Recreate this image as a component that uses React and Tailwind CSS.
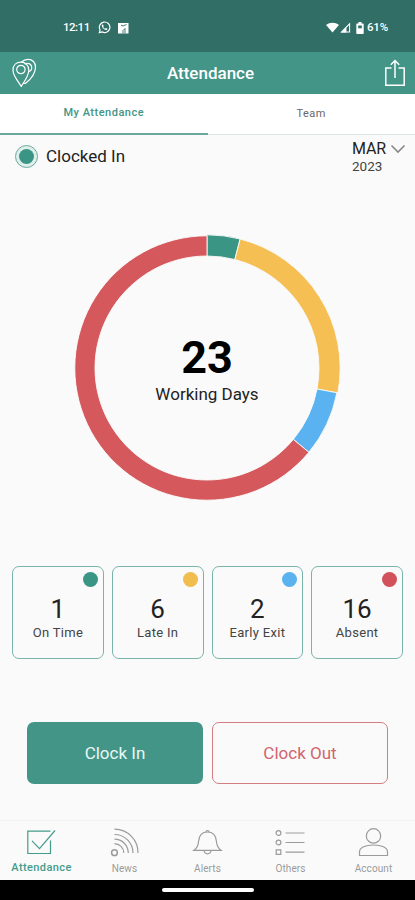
import { useState } from "react";

const stats = [
  { label: "On Time", value: 1, color: "#3b9584", dot: "bg-[#3b9584]" },
  { label: "Late In", value: 6, color: "#f5bf54", dot: "bg-[#f0bd4e]" },
  { label: "Early Exit", value: 2, color: "#5ab3f0", dot: "bg-[#5ab3ee]" },
  { label: "Absent", value: 16, color: "#d4585c", dot: "bg-[#d1525a]" },
];

const point = (r, turn) => {
  const a = turn * Math.PI * 2;
  return `${135 + r * Math.sin(a)} ${135 - r * Math.cos(a)}`;
};

function Donut() {
  const total = stats.reduce((sum, s) => sum + s.value, 0);
  let start = 0;

  return (
    <svg viewBox="0 0 270 270" className="col-start-1 row-start-1 w-[270px] h-[270px]">
      {stats.map((s, i) => {
        const from = start / total;
        start += s.value;
        const to = start / total;
        const large = to - from > 0.5 ? 1 : 0;
        const outer = i < 2 ? 133.2 : 132.2;
        const inner = 112;
        return (
          <path
            key={s.label}
            d={`M${point(outer, from)} A${outer} ${outer} 0 ${large} 1 ${point(outer, to)} L${point(inner, to)} A${inner} ${inner} 0 ${large} 0 ${point(inner, from)} Z`}
            fill={s.color}
            stroke="#fbfbfb"
            strokeWidth="0.9"
          />
        );
      })}
    </svg>
  );
}

function StatusBar() {
  return (
    <div className="h-[52px] bg-[#306e66] flex items-center justify-between pl-[63px] pr-[26px] pt-[3px] text-white">
      <div className="flex items-center">
        <span className="w-[25px] text-[11.5px] font-medium leading-none tracking-[-0.5px]">12:11</span>
        <svg viewBox="0 0 24 24" className="w-[13px] h-[13px] ml-[10px]" fill="none" stroke="currentColor">
          <path d="M2.500 21.500l1.400-5A9.700 9.700 0 1 1 7.600 20.100z" strokeWidth="2.200" />
          <path
            d="M8 6.500c-1.500 1-1.600 3 .2 5.600 2 3 4.600 4.900 7 4.700 1.500-.2 2.200-1.200 2.300-2.500l-3-1.400-1.300 1.500c-1.600-.7-3-2-3.700-3.500l1.100-1.400L9.400 6.500z"
            fill="currentColor"
            stroke="none"
          />
        </svg>
        <svg viewBox="0 0 12 12" className="w-[12px] h-[12px] ml-[6px]">
          <path d="M1 1h10.500v10.500H1z" fill="#fff" />
          <path d="M4 3.200l2 .8 3.500-1.500M6 11.500V8.500l2-2v5" fill="none" stroke="#306e66" strokeWidth="0.900" />
        </svg>
      </div>
      <div className="flex items-center">
        <svg viewBox="0 0 14 12" className="w-[13px] h-[11px]" fill="currentColor">
          <path d="M0 3.200C4 0 10 0 14 3.200L7 11.500z" />
        </svg>
        <svg viewBox="0 0 12 12" className="w-[11px] h-[11px] ml-[1px]">
          <path d="M1.500 11L10.500 2v9z" fill="none" stroke="#fff" strokeWidth="1.100" />
          <path d="M1 11.500L7 5.500v6z" fill="#fff" />
        </svg>
        <svg viewBox="0 0 8 12" className="w-[8px] h-[12px] ml-[5px]">
          <path d="M2.500 0h3v1.500H7q.7 0 .7.700v9q0 .8-.7.800H1q-.7 0-.7-.8v-9q0-.7.700-.7h1.500z" fill="#fff" />
          <path d="M2.200 3.500h3.600v2.800H2.200z" fill="#306e66" />
        </svg>
        <span className="w-[22px] ml-[3px] text-[11.5px] font-medium leading-none tracking-[-0.2px]">61%</span>
      </div>
    </div>
  );
}

function Header() {
  return (
    <header className="h-[42px] bg-[#429587] flex items-center justify-between pl-[11px] pr-[9px] text-white">
      <svg viewBox="0 0 26 30" className="w-[26px] h-[30px]" fill="none" stroke="currentColor" strokeWidth="1.200">
        <path d="M10.300 28.300C7 23.500 2 17.500 2 12.200C2 7 5.500 4.200 10 4.200C14.500 4.200 17.800 7.500 17.800 12.200C17.800 17.500 13.500 23.500 10.300 28.300z" />
        <circle cx="9.900" cy="11.500" r="4.200" />
        <path d="M10.500 4C12.500 2 14.500 1.300 17 1.300C21.500 1.300 24.500 4.500 24.500 9C24.500 15.500 19.500 21.500 14.300 25.500L12.200 25.300" />
        <path d="M13.700 6.300C16 4.300 20.700 5.300 20.700 9.500C20.700 12 19 13.400 17.300 13.500" />
      </svg>
      <h1 className="text-[17px] font-medium leading-none">Attendance</h1>
      <svg viewBox="0 0 22 28" className="w-[22px] h-[28px]" fill="none" stroke="currentColor" strokeWidth="1.500">
        <path d="M7.500 9H1.800v17.200h18.400V9h-5.700" />
        <path d="M11 19V2M6.800 5.700L11 1.500l4.200 4.200" />
      </svg>
    </header>
  );
}

function NavIcon({ name }) {
  if (name === "Attendance") {
    return (
      <>
        <path d="M24.500 13.500V26.500H1.800V4.200H24.500" />
        <path d="M6 13.800l7.500 7.800L29 3.500" />
      </>
    );
  }
  if (name === "News") {
    return (
      <>
        <circle cx="5.500" cy="25.700" r="2.900" strokeWidth="1.500" />
        <path d="M5.500 16.700A9.300 9.300 0 0 1 14.800 26M5.500 12.200A13.800 13.800 0 0 1 19.300 26M5.500 7.500A18.500 18.500 0 0 1 24 26M5.500 2.200A23.500 23.500 0 0 1 29 26" />
      </>
    );
  }
  if (name === "Alerts") {
    return (
      <>
        <path d="M2 23.300c3.300-2.300 4.300-4.300 4.600-9C7 8.500 10 5 15.500 5S24 8.500 24.400 14.300c.3 4.700 1.300 6.700 4.600 9z" />
        <path d="M14 5c0-2 3-2 3 0M12 23.500c.3 2.500 1.500 3.300 3.500 3.300s3.200-.8 3.500-3.300" />
      </>
    );
  }
  if (name === "Others") {
    return (
      <>
        <circle cx="3.500" cy="6" r="2.400" />
        <circle cx="3.500" cy="15.500" r="2.400" />
        <path d="M1.200 22.800h4.600v4.600H1.200z" />
        <path d="M10.500 6H29.500M10.500 15.500H29.500M10.500 25.200H29.500" />
      </>
    );
  }
  return (
    <>
      <circle cx="15.500" cy="8.900" r="7.200" />
      <path d="M1.500 28.500v-3.500c0-4.500 6-7 14-7s14 2.500 14 7V28.500z" />
    </>
  );
}

const navItems = ["Attendance", "News", "Alerts", "Others", "Account"];

function BottomNav() {
  return (
    <nav className="h-[60px] border-t border-[#f1f1f1] grid grid-cols-5">
      {navItems.map((name, i) => (
        <div
          key={name}
          className={`flex flex-col items-center pt-[6px] ${i === 0 ? "text-[#459c8b]" : "text-[#9b9b9b]"}`}
        >
          <svg
            viewBox="0 0 31 31"
            className="w-[31px] h-[31px]"
            fill="none"
            stroke="currentColor"
            strokeWidth="1.200"
          >
            <NavIcon name={name} />
          </svg>
          <span
            className={
              i === 0
                ? "text-[11px] leading-[14px] mt-[3px] font-medium tracking-[0.4px]"
                : "text-[10px] leading-[14px] mt-[4px] tracking-[0.1px]"
            }
          >
            {name}
          </span>
        </div>
      ))}
    </nav>
  );
}

function App() {
  const [tab, setTab] = useState("mine");

  return (
    <div className="w-[415px] h-[900px] bg-[#fafafa] flex flex-col overflow-hidden font-['Roboto',sans-serif] text-[#222]">
      <StatusBar />
      <Header />

      <div className="h-[41px] shrink-0 bg-white grid grid-cols-2 text-[11px]">
        <button
          onClick={() => setTab("mine")}
          className={
            tab === "mine"
              ? "text-[#429587] border-b-2 border-[#6aaa9e] font-medium tracking-[0.5px]"
              : "text-[#666] border-b border-[#dfe7e5] tracking-[0.5px]"
          }
        >
          My Attendance
        </button>
        <button
          onClick={() => setTab("team")}
          className={
            tab === "team"
              ? "text-[#429587] border-b-2 border-[#6aaa9e] font-medium tracking-[0.5px]"
              : "text-[#666] border-b border-[#dfe7e5] tracking-[0.5px]"
          }
        >
          Team
        </button>
      </div>

      <div className="h-[98px] flex justify-between pl-[15px] pr-[9px]">
        <div className="flex items-center h-[43px]">
          <span className="w-[23px] h-[23px] rounded-full border border-[#6aaa9e] bg-[#e0efec] flex items-center justify-center">
            <span className="w-[15px] h-[15px] rounded-full bg-[#3b9584]" />
          </span>
          <span className="ml-[8px] text-[17px] leading-none">Clocked In</span>
        </div>
        <div className="pt-[5px]">
          <div className="flex items-center">
            <span className="text-[16px] leading-[18px] w-[38px] tracking-[-0.2px]">MAR</span>
            <svg viewBox="0 0 16 10" className="w-[16px] h-[10px]" fill="none" stroke="#888" strokeWidth="1.600">
              <path d="M1.500 1.500L8 8l6.500-6.500" />
            </svg>
          </div>
          <div className="text-[13.5px] leading-[16px] text-[#444]">2023</div>
        </div>
      </div>

      <div className="grid place-items-center h-[270px] shrink-0 pr-px">
        <Donut />
        <div className="col-start-1 row-start-1 text-center pt-[4px]">
          <div className="text-[45px] leading-[48px] font-bold text-black">23</div>
          <div className="text-[17px] leading-[24px]">Working Days</div>
        </div>
      </div>

      <div className="grid grid-cols-4 gap-[8px] pl-[12px] pr-[12px] mt-[63px]">
        {stats.map((s) => (
          <div key={s.label} className="h-[93px] border border-[#78b4a8] rounded-[7px] flex flex-col items-center">
            <span className={`w-[15px] h-[15px] rounded-full self-end mt-[5px] mr-[5px] ${s.dot}`} />
            <span className="text-[26px] leading-[30px] mt-[7px]">{s.value}</span>
            <span className="text-[13px] leading-[16px] mt-px tracking-[0.3px] text-[#444]">{s.label}</span>
          </div>
        ))}
      </div>

      <div className="grid grid-cols-2 gap-[9px] px-[27px] mt-[63px] mb-auto text-[17px]">
        <button className="h-[62px] pt-[2px] rounded-[7px] bg-[#429587] text-[#eaf8f5]">Clock In</button>
        <button className="h-[62px] pt-[2px] rounded-[7px] border border-[#d27d83] text-[#cf656d]">Clock Out</button>
      </div>

      <BottomNav />
      <div className="h-[20px] shrink-0 bg-black flex justify-center items-center">
        <span className="w-[92px] h-[4px] rounded-full bg-white" />
      </div>
    </div>
  );
}

export default App;
